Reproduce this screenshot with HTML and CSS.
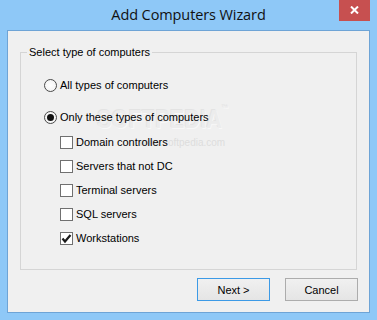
FILE: index.html
```html
<!DOCTYPE html>
<html>
<head>
<meta charset="utf-8">
<link rel="stylesheet" href="styles.css">
</head>
<body>
<div class="window">
  <div class="titlebar">
    <span></span>
    <span class="title">Add Computers Wizard</span>
    <div class="close">
      <svg width="9" height="8" viewBox="0 0 9 8"><path d="M1 0.5 L8 7.5 M8 0.5 L1 7.5" stroke="#fff" stroke-width="2"/></svg>
    </div>
  </div>
  <div class="client">
    <div class="group">
      <span class="legend">Select type of computers</span>
      <div class="opt r1"><span class="radio"></span>All types of computers</div>
      <div class="opt r2"><span class="radio checked"></span>Only these types of computers</div>
      <div class="checks">
        <div class="opt"><span class="cbox"></span>Domain controllers</div>
        <div class="opt"><span class="cbox"></span>Servers that not DC</div>
        <div class="opt"><span class="cbox"></span>Terminal servers</div>
        <div class="opt"><span class="cbox"></span>SQL servers</div>
        <div class="opt"><span class="cbox checked"><svg width="11" height="11" viewBox="0 0 11 11"><path d="M1.5 5.5 L4 8.5 L9.5 2" fill="none" stroke="#1a1a1a" stroke-width="2.2"/></svg></span>Workstations</div>
      </div>
      <div class="watermark">SOFTPEDIA<sup>™</sup></div>
      <div class="watermark2">www.softpedia.com</div>
    </div>
    <div class="buttons">
      <button class="btn default">Next &gt;</button>
      <button class="btn">Cancel</button>
    </div>
  </div>
</div>
</body>
</html>
```
FILE: styles.css
```css
html, body {
  margin: 0;
  padding: 0;
}
body {
  width: 377px;
  height: 320px;
  overflow: hidden;
}
.window {
  width: 377px;
  height: 320px;
  box-sizing: border-box;
  background: #8ec8f7;
  padding: 0 7px 7px 7px;
  display: flex;
  flex-direction: column;
}
.titlebar {
  height: 30px;
  display: grid;
  grid-template-columns: 1fr auto 1fr;
  align-items: start;
  margin: 0 -7px;
}
.title {
  font-family: "Open Sans", "Noto Sans", sans-serif;
  font-size: 14.5px;
  color: #111;
  line-height: 30px;
  letter-spacing: -0.1px;
}
.close {
  justify-self: end;
  width: 31px;
  height: 21px;
  margin-right: 7px;
  background: #c75050;
  display: flex;
  align-items: center;
  justify-content: center;
}
.close svg { display: block; margin-top: -1px; }
.client {
  flex: 1;
  border: 1px solid #6ea4d6;
  background: #f0f0f0;
  display: flex;
  flex-direction: column;
  font-family: "Liberation Sans", Arial, sans-serif;
  font-size: 11px;
  color: #000;
}
.group {
  position: relative;
  margin: 21px 12px 0 12px;
  height: 218px;
  box-sizing: border-box;
  border: 1px solid #d5d5d5;
  padding: 26px 0 0 23px;
  display: flex;
  flex-direction: column;
}
.legend {
  position: absolute;
  top: -7px;
  left: 6px;
  padding: 0 2px;
  background: #f0f0f0;
  line-height: 13px;
}
.opt {
  display: flex;
  align-items: center;
  height: 13px;
  line-height: 13px;
  gap: 3px;
  white-space: nowrap;
  position: relative;
  z-index: 1;
}
.r2 { margin-top: 19px; }
.checks {
  margin: 12px 0 0 16px;
  display: flex;
  flex-direction: column;
  gap: 11px;
}
.radio {
  width: 13px;
  height: 13px;
  box-sizing: border-box;
  border: 1px solid #4a4a4a;
  border-radius: 50%;
  background: radial-gradient(circle at 50% 50%, #ffffff 0%, #f4f4f4 70%, #e6e6e6 100%);
  display: flex;
  align-items: center;
  justify-content: center;
  flex: none;
}
.radio.checked::after {
  content: "";
  width: 7px;
  height: 7px;
  border-radius: 50%;
  background: #111;
}
.cbox {
  width: 13px;
  height: 13px;
  box-sizing: border-box;
  border: 1px solid #707070;
  background: #fff;
  display: flex;
  align-items: center;
  justify-content: center;
  flex: none;
}
.cbox svg { display: block; }
.watermark {
  position: absolute;
  left: 76px;
  top: 51px;
  font-family: "Liberation Sans", Arial, sans-serif;
  font-size: 26px;
  font-weight: bold;
  color: #ececec;
  text-shadow: 1px 1px 0 #f8f8f8, -1px -1px 0 #e3e3e3;
  transform: scaleX(0.84);
  transform-origin: left top;
  z-index: 0;
}
.watermark sup { font-size: 8px; vertical-align: top; }
.watermark2 {
  position: absolute;
  left: 118px;
  top: 84px;
  font-size: 10px;
  color: #dddddd;
  z-index: 0;
}
.buttons {
  display: flex;
  justify-content: flex-end;
  gap: 15px;
  margin: 8px 11px 0 0;
}
.btn {
  width: 73px;
  height: 23px;
  box-sizing: border-box;
  border: 1px solid #acacac;
  background: linear-gradient(#f0f0f0, #e5e5e5);
  font-family: "Liberation Sans", Arial, sans-serif;
  font-size: 11px;
  color: #000;
  padding: 0;
  border-radius: 0;
}
.btn.default {
  border-color: #3c9ae6;
}
```
